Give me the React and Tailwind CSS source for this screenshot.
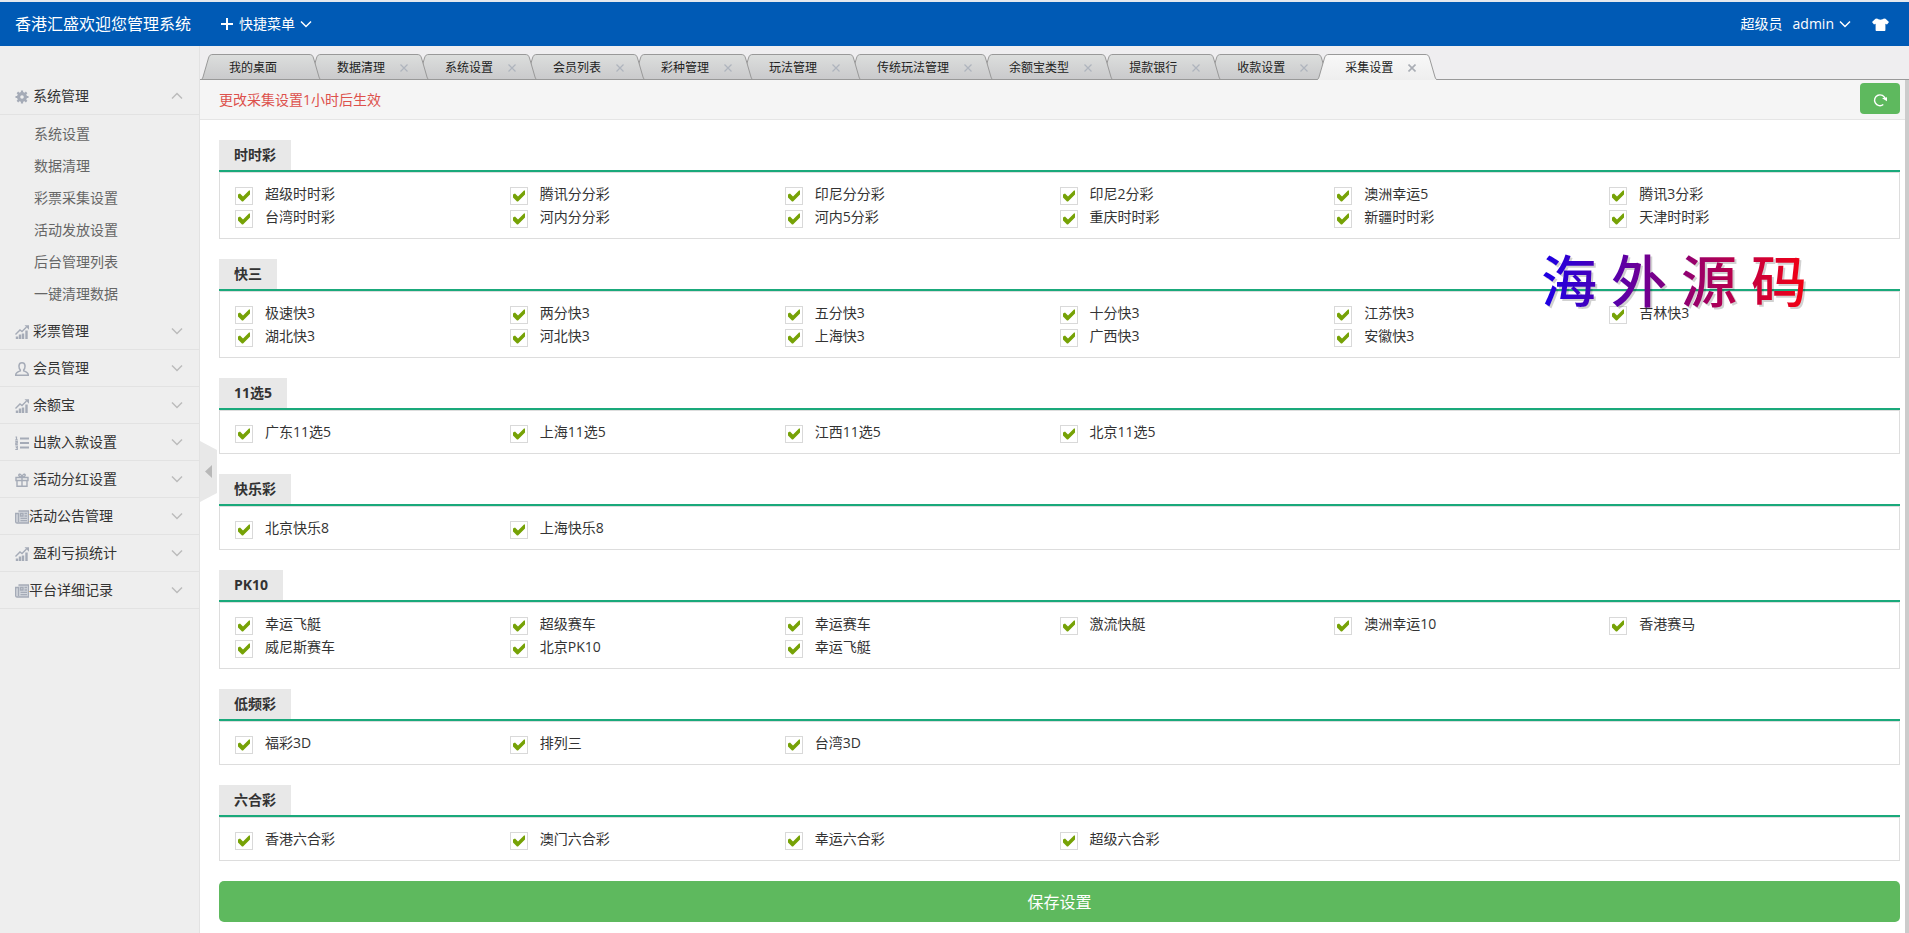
import { useState } from 'react';

const menus = [
  {
    title: '系统管理',
    icon: 'gear',
    items: ['系统设置', '数据清理', '彩票采集设置', '活动发放设置', '后台管理列表', '一键清理数据'],
  },
  { title: '彩票管理', icon: 'chart' },
  { title: '会员管理', icon: 'user' },
  { title: '余额宝', icon: 'chart' },
  { title: '出款入款设置', icon: 'list' },
  { title: '活动分红设置', icon: 'gift' },
  { title: '活动公告管理', icon: 'news', tight: true },
  { title: '盈利亏损统计', icon: 'chart' },
  { title: '平台详细记录', icon: 'news', tight: true },
];

const tabs = [
  '我的桌面', '数据清理', '系统设置', '会员列表', '彩种管理', '玩法管理',
  '传统玩法管理', '余额宝类型', '提款银行', '收款设置', '采集设置',
];

const groups = [
  {
    name: '时时彩',
    items: ['超级时时彩', '腾讯分分彩', '印尼分分彩', '印尼2分彩', '澳洲幸运5', '腾讯3分彩', '台湾时时彩', '河内分分彩', '河内5分彩', '重庆时时彩', '新疆时时彩', '天津时时彩'],
  },
  {
    name: '快三',
    items: ['极速快3', '两分快3', '五分快3', '十分快3', '江苏快3', '吉林快3', '湖北快3', '河北快3', '上海快3', '广西快3', '安徽快3'],
  },
  { name: '11选5', items: ['广东11选5', '上海11选5', '江西11选5', '北京11选5'] },
  { name: '快乐彩', items: ['北京快乐8', '上海快乐8'] },
  {
    name: 'PK10',
    items: ['幸运飞艇', '超级赛车', '幸运赛车', '激流快艇', '澳洲幸运10', '香港赛马', '威尼斯赛车', '北京PK10', '幸运飞艇'],
  },
  { name: '低频彩', items: ['福彩3D', '排列三', '台湾3D'] },
  { name: '六合彩', items: ['香港六合彩', '澳门六合彩', '幸运六合彩', '超级六合彩'] },
];

function MenuIcon({ name }) {
  const props = { viewBox: '0 0 14 14', className: 'w-[14px] h-[14px] shrink-0 mt-px text-[#a5abb7]', fill: 'none', stroke: 'currentColor' };
  if (name === 'gear')
    return (
      <svg {...props}>
        <circle cx="7" cy="7" r="3.4" strokeWidth="3.2" />
        <path d="M7 .5v13M.5 7h13M2.400 2.400l9.200 9.200M11.600 2.400L2.400 11.600" strokeWidth="2.200" />
        <circle cx="7" cy="7" r="1.800" fill="#eee" stroke="none" />
      </svg>
    );
  if (name === 'chart')
    return (
      <svg {...props}>
        <path d="M2 14v-2.500M5 14V9.500M8 14V8.500M11.500 14V5.500" strokeWidth="2.400" />
        <path d="M.5 9.500l4.500-4.500 2 1.500L11.500 2" strokeWidth="1.400" />
        <path d="M9.500.3H14V4.800z" fill="currentColor" stroke="none" />
      </svg>
    );
  if (name === 'user')
    return (
      <svg {...props} strokeWidth="1.500">
        <path d="M5.300 7.800C4 6.800 3.900 5 4 3.600 4.200 1.800 5.400.8 7 .8s2.800 1 3 2.800c.1 1.400 0 3.200-1.300 4.200v1.100c1.600.6 4.500 1.100 4.600 4.300H.7c.1-3.200 3-3.700 4.600-4.300z" />
      </svg>
    );
  if (name === 'list')
    return (
      <svg {...props}>
        <path d="M5 2.500h9M5 7h9M5 11.500h9" strokeWidth="2" />
        <path d="M.5 1h1v3M0 4h3M.3 5.600h2v1.600H.8v1.300h2M.3 10h2v3.500h-2M.8 11.700h1.500" strokeWidth="1.200" />
      </svg>
    );
  if (name === 'gift')
    return (
      <svg {...props} strokeWidth="1.400">
        <path d="M1 4.500h12v3H1zM2 7.500h10v5.700H2zM7 4.500v8.700" />
        <path d="M7 4.300C5.500 4 3.500 3.600 3.800 2 4.200.5 6.500 1 7 4.300 7.500 1 9.800.5 10.200 2c.3 1.600-1.700 2-3.200 2.300z" />
      </svg>
    );
  return (
    <svg {...props} strokeWidth="1.300">
      <path d="M3.500 1h10v12H2C1 13 .6 12.400.6 11.500V3.500h2.900V12" fill="#d3d6dc" />
      <path d="M5.500 3.500h2.500V6H5.500zM9.500 3.500h2.500M9.500 6h2.500M5.500 8.300h6.500M5.500 10.700h6.500" />
    </svg>
  );
}

function Chevron({ className, up }) {
  return (
    <svg viewBox="0 0 12 8" className={className} fill="none" stroke="currentColor" strokeWidth="1.500">
      <path d={up ? 'M1 6.500L6 1.500L11 6.500' : 'M1 1.500L6 6.500L11 1.500'} />
    </svg>
  );
}

function Header() {
  return (
    <header className="h-[46px] shrink-0 border-t-2 border-[#e4e8ee] bg-[#005ab5] bg-clip-padding text-white flex items-center pl-[15px] pr-5">
      <a href="#home" className="text-base leading-6">香港汇盛欢迎您管理系统</a>
      <button className="ml-[30px] flex items-center text-sm cursor-pointer">
        <svg viewBox="0 0 12 12" className="w-3 h-3 mr-[6px]" stroke="currentColor" strokeWidth="2">
          <path d="M6 0v12M0 6h12" />
        </svg>
        快捷菜单
        <Chevron className="w-[12px] h-[8px] ml-[5px]" />
      </button>
      <div className="ml-auto flex items-center text-sm">
        <span>超级员</span>
        <button className="ml-[10px] flex items-center cursor-pointer">
          admin
          <Chevron className="w-[12px] h-[8px] ml-[5px]" />
        </button>
        <button aria-label="换肤" className="ml-[21px] cursor-pointer">
          <svg viewBox="0 0 17 13" className="w-[17px] h-[13px]" fill="currentColor">
            <path d="M5.200.5c1 1.500 5.600 1.500 6.600 0L13.500.8 17 4l-2 2.500-1.600-.8V12c0 .6-.4 1-1 1H4.600c-.6 0-1-.4-1-1V5.700L2 6.500 0 4 3.500.8z" />
          </svg>
        </button>
      </div>
    </header>
  );
}

function Sidebar() {
  const [open, setOpen] = useState(0);
  return (
    <aside className="w-[200px] shrink-0 bg-[#eee] border-r border-[#e2e2e2] pt-8 text-sm">
      {menus.map((menu, i) => (
        <div key={menu.title}>
          <button
            className="w-full h-[37px] border-b border-[#e2e2e2] pl-[15px] pr-4 flex items-center text-[#333] cursor-pointer"
            onClick={() => setOpen(open === i ? -1 : i)}>
            <MenuIcon name={menu.icon} />
            <span className={menu.tight ? '' : 'ml-1'}>{menu.title}</span>
            <Chevron up={open === i && !!menu.items} className="w-[12px] h-[8px] ml-auto text-[#bbb]" />
          </button>
          {open === i && menu.items && (
            <ul className="py-[3px]">
              {menu.items.map((item) => (
                <li key={item}>
                  <a href="#page" className="block pl-[34px] leading-8 text-[#666] hover:text-[#148cf1]">{item}</a>
                </li>
              ))}
            </ul>
          )}
        </div>
      ))}
    </aside>
  );
}

function TabEdge({ active, flip }) {
  return (
    <svg
      viewBox="0 0 12 26"
      className={`w-3 h-[26px] shrink-0 ${flip ? '-scale-x-100' : ''}`}
      fill={active ? 'url(#tab-on)' : 'url(#tab-off)'}>
      <path d="M0 26C1 25.500 1.500 24.500 2 23L7.500 4C8.500 1 9.500.5 12 .5V26z" />
      <path
        d={active ? 'M0 25.500C1 25.500 1.500 24.500 2 23L7.500 4C8.500 1 9.500.5 12 .5' : 'M12 25.500H0C1 25.500 1.500 24.500 2 23L7.500 4C8.500 1 9.500.5 12 .5'}
        fill="none"
        stroke="#999"
      />
    </svg>
  );
}

function TabBar() {
  const [current, setCurrent] = useState(tabs.length - 1);
  return (
    <nav className="h-[34px] shrink-0 bg-[#efeef0] shadow-[inset_0_-1px_0_#999] flex items-end pl-px text-xs">
      <svg className="absolute w-0 h-0" aria-hidden="true">
        <linearGradient id="tab-off" x1="0" y1="0" x2="0" y2="1">
          <stop offset="0" stopColor="#dcdedd" />
          <stop offset="1" stopColor="#c9c9cb" />
        </linearGradient>
        <linearGradient id="tab-on" x1="0" y1="0" x2="0" y2="1">
          <stop offset="0" stopColor="#f8f8f8" />
          <stop offset="1" stopColor="#eeeeee" />
        </linearGradient>
      </svg>
      {tabs.map((tab, i) => {
        const active = i === current;
        return (
          <div
            key={tab}
            className="relative flex items-end -mr-3"
            style={{ zIndex: active ? 20 : tabs.length - i }}>
            <TabEdge active={active} />
            <div
              className={`h-[26px] pl-4 flex items-center border-t border-[#999] ${
                active
                  ? 'bg-linear-to-b from-[#f8f8f8] to-[#eee]'
                  : 'bg-linear-to-b from-[#dcdedd] to-[#c9c9cb] shadow-[inset_0_-1px_0_#999]'
              }`}>
              <button className="text-[#222] cursor-pointer whitespace-nowrap" onClick={() => setCurrent(i)}>
                {tab}
              </button>
              <span className="w-8 flex items-center justify-center pl-[5px]">
                {i > 0 && (
                  <button aria-label={`关闭${tab}`} className="cursor-pointer">
                    <svg viewBox="0 0 8 8" className="w-2 h-2" stroke={active ? '#a9adb4' : '#aeb4bd'} strokeWidth={active ? 1.6 : 1.2}>
                      <path d="M.5.5l7 7M7.500.5l-7 7" />
                    </svg>
                  </button>
                )}
              </span>
            </div>
            <TabEdge active={active} flip />
          </div>
        );
      })}
    </nav>
  );
}

function CheckItem({ label }) {
  return (
    <label className="h-[23px] flex items-start cursor-pointer">
      <span className="grid shrink-0">
        <input
          type="checkbox"
          defaultChecked
          className="peer appearance-none col-start-1 row-start-1 w-[18px] h-[18px] border border-[#d9d9d9] bg-white"
        />
        <svg
          viewBox="0 0 18 18"
          className="col-start-1 row-start-1 w-[18px] h-[18px] pointer-events-none invisible peer-checked:visible"
          fill="#76a206">
          <path d="M3 7.500L5 6.500L8 9.500L14 3.500H15V7.500L8 14.500H7L3 10.500z" />
        </svg>
      </span>
      <span className="ml-3 leading-[14px]">{label}</span>
    </label>
  );
}

function Group({ name, items }) {
  return (
    <section className="mb-5">
      <div className="border-b-2 border-[#1aa97b] flex">
        <h2 className="h-[30px] px-[15px] bg-[#e8e8e8] font-bold leading-[30px]">{name}</h2>
      </div>
      <div className="border border-[#ddd] pt-[14px] pb-[5px] px-[15px] grid grid-cols-6">
        {items.map((item, i) => (
          <CheckItem key={i} label={item} />
        ))}
      </div>
    </section>
  );
}

function Watermark({ text }) {
  return (
    <div className="absolute right-[102px] top-[194px] flex gap-[14px] text-[56px] leading-[80px] font-medium bg-linear-to-r/srgb from-[#1a00e6] to-[#f50010] bg-clip-text text-transparent drop-shadow-[2px_2px_0_rgba(0,0,0,0.18)] pointer-events-none">
      {[...text].map((char) => (
        <span key={char}>{char}</span>
      ))}
    </div>
  );
}

export default function App() {
  return (
    <div className="min-h-screen flex flex-col bg-white text-[#333] font-['Open_Sans','Noto_Sans_CJK_SC',sans-serif]">
      <Header />
      <div className="flex-1 flex">
        <Sidebar />
        <div className="relative flex-1 min-w-0 flex flex-col">
          <TabBar />
          <button aria-label="收起菜单" className="absolute left-0 top-[395px] cursor-pointer">
            <svg viewBox="0 0 17 61" className="w-[17px] h-[61px]">
              <path d="M0 0L17 9V52L0 61z" fill="#e8e8e8" />
              <path d="M5 30.500L12 24V37z" fill="#b8b8b8" />
            </svg>
          </button>

          <div className="flex-1 flex">
            <main className="flex-1 min-w-0 text-sm">
              <div className="h-10 pl-[19px] pr-[5px] bg-[#f5f5f5] border-b border-[#e5e5e5] flex items-center justify-between">
                <p className="text-[#dd514c]">更改采集设置1小时后生效</p>
                <button
                  aria-label="刷新"
                  className="w-10 h-[31px] mb-[2px] rounded-sm bg-[#5eb95e] text-white flex items-center justify-center cursor-pointer">
                  <svg viewBox="0 0 14 14" className="w-[14px] h-[14px] mt-[2px]" fill="none" stroke="currentColor" strokeWidth="1.400">
                    <path d="M10.300 11.500A5.400 5.400 0 1 1 12.200 6" />
                    <path d="M9 5.200L14 4.200V8.200z" fill="currentColor" stroke="none" />
                  </svg>
                </button>
              </div>
              <form className="pl-[19px] pr-[5px] pt-5 pb-[10px]" onSubmit={(e) => e.preventDefault()}>
                {groups.map((group) => (
                  <Group key={group.name} name={group.name} items={group.items} />
                ))}
                <button type="submit" className="w-full h-[41px] rounded-[5px] bg-[#5eb95e] text-white text-base cursor-pointer">
                  保存设置
                </button>
              </form>
            </main>
            <div className="w-1 bg-[#ccc]" />
          </div>

          <Watermark text="海外源码" />
        </div>
      </div>
    </div>
  );
}
